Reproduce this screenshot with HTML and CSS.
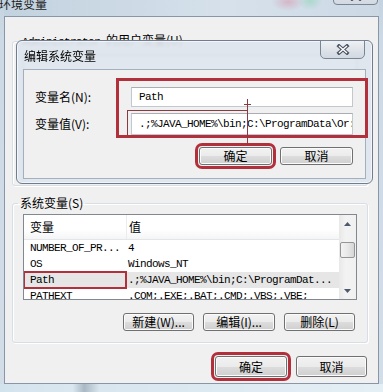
FILE: index.html
```html
<!DOCTYPE html>
<html>
<head>
    <meta charset="UTF-8">
    <title>环境变量</title>
    <link rel="stylesheet" href="styles.css">
</head>

<body>
    <div class="window">
        <div class="title-bar">
            <span class="title">环境变量</span>
            <div class="close-btn outer-close">
                <svg width="14" height="11" viewBox="0 0 14 11"><path d="M3 2 L11 9 M11 2 L3 9" stroke="#4c5563" stroke-width="3.6" stroke-linecap="square"/><path d="M3 2 L11 9 M11 2 L3 9" stroke="#fff" stroke-width="1.4"/></svg>
            </div>
        </div>

        <div class="win-body">
            <fieldset class="group user-group">
                <legend><span class="mono">Administrator </span>的用户变量(U)</legend>
                <div class="list user-list">
                    <div class="list-head"></div>
                </div>
            </fieldset>

            <fieldset class="group">
                <legend>系统变量(S)</legend>
                <div class="list">
                    <div class="list-main">
                        <div class="list-head"><div class="col-name">变量</div><div class="col-value">值</div></div>
                        <div class="row"><div class="col-name mono">NUMBER_OF_PR...</div><div class="col-value mono">4</div></div>
                        <div class="row"><div class="col-name mono">OS</div><div class="col-value mono">Windows_NT</div></div>
                        <div class="row selected"><div class="col-name mono marked-cell">Path</div><div class="col-value mono">.;%JAVA_HOME%\bin;C:\ProgramDat...</div></div>
                        <div class="row"><div class="col-name mono">PATHEXT</div><div class="col-value mono">.COM;.EXE;.BAT;.CMD;.VBS;.VBE;</div></div>
                    </div>
                    <div class="scrollbar">
                        <div class="arrow"><svg width="7" height="4" viewBox="0 0 7 4"><path d="M0 4 L3.5 0 L7 4 Z" fill="#4d5a6e"/></svg></div>
                        <div class="thumb"></div>
                        <div class="arrow down"><svg width="7" height="4" viewBox="0 0 7 4"><path d="M0 0 L3.5 4 L7 0 Z" fill="#4d5a6e"/></svg></div>
                    </div>
                </div>
                <div class="btn-row group-buttons">
                    <button class="btn w71">新建(W)...</button>
                    <button class="btn w72">编辑(I)...</button>
                    <button class="btn w71">删除(L)</button>
                </div>
            </fieldset>

            <div class="btn-row foot">
                <button class="btn w72 tall marked">确定</button>
                <button class="btn w71 tall">取消</button>
            </div>
        </div>

        <!-- диалог поверх окна -->
        <div class="dialog">
            <div class="dialog-title">
                <span>编辑系统变量</span>
                <div class="close-btn inner-close">
                    <svg width="14" height="11" viewBox="0 0 14 11"><path d="M3 2 L11 9 M11 2 L3 9" stroke="#4c5563" stroke-width="3.6" stroke-linecap="square"/><path d="M3 2 L11 9 M11 2 L3 9" stroke="#fff" stroke-width="1.4"/></svg>
                </div>
            </div>
            <div class="dialog-body">
                <div class="fields">
                    <label>变量名(N):</label>
                    <div class="input mono">Path</div>
                    <label>变量值(V):</label>
                    <div class="input mono tall-input">.;%JAVA_HOME%\bin;C:\ProgramData\Or:</div>
                </div>
                <div class="btn-row dialog-buttons">
                    <button class="btn w73 marked">确定</button>
                    <button class="btn w73">取消</button>
                </div>
                <div class="mark-box"></div>
                <div class="mark-line line-v"></div>
                <div class="mark-line line-h"></div>
                <div class="mark-line line-left"></div>
                <div class="mark-line line-tick"></div>
            </div>
        </div>
    </div>
</body>
</html>
```

FILE: styles.css
```css
* { box-sizing: border-box; }
body {
    margin: 0;
    width: 383px; height: 392px;
    overflow: hidden;
    background: linear-gradient(to right, #d3e3ee 0%, #dae7f0 19%, #a9b8c4 22%, #d9e6ef 26%, #e4eef5 100%);
    font: 12px/14px "Noto Sans CJK SC", sans-serif;
    color: #000;
}
.mono {
    font-family: "Liberation Mono", "Noto Sans CJK SC", monospace;
    font-size: 11px;
    letter-spacing: -0.6px;
}

.window {
    position: relative;
    height: 387px;
    padding: 0 4px;
    background: linear-gradient(#c4d3e0, #cdd9e5 40px, #d2dde8);
}
.title-bar {
    position: relative;
    height: 19px;
    background:
        radial-gradient(ellipse 16px 9px at 284px 5px, rgba(214,150,172,.55), transparent),
        radial-gradient(ellipse 12px 9px at 306px 4px, rgba(140,212,182,.55), transparent),
        linear-gradient(to right, #c2d2df, #d6e1eb 60%, #ccd9e5);
}
.title { display: block; margin: -3px 0 0 -5px; color: #1b1b1b; }

.close-btn {
    position: absolute;
    width: 45px; height: 19px;
    border: 1px solid #7a8594;
    border-radius: 0 0 4px 4px;
    background: linear-gradient(#eef1f5, #dfe4ea 50%, #d1d8e1);
    display: flex; justify-content: center; align-items: center;
}
.outer-close { right: 1px; top: -11px; }
.inner-close { right: 7px; top: -1px; border-radius: 0 0 5px 5px; }

.win-body {
    height: 368px;
    border: 1px solid #8796a8;
    background: #f0f0f0;
}

.group {
    width: 356px;
    min-width: 0;
    margin: 0 0 0 7px;
    padding: 0 10px;
    border: 1px solid #d5dfe5;
    border-radius: 3px;
    box-shadow: 1px 1px 0 #fff, inset 1px 1px 0 #fff;
}
.group legend { padding: 0 2px; margin-left: -5px; line-height: 14px; }
.user-group { margin-top: 16px; }
.user-group legend { margin-left: -3px; }
.user-group + .group { margin-top: 10px; padding: 4px 10px 11px; }

.list {
    display: flex;
    height: 86px;
    border: 1px solid #828790;
    background: #fff;
    overflow: hidden;
}
.user-list { display: block; height: 129px; margin-top: 6px; margin-bottom: 1px; }
.list-main { flex: 1; }
.list-head {
    display: grid;
    grid-template-columns: 102px 1fr;
    height: 25px;
    border-bottom: 1px solid #e5e5e5;
    background: linear-gradient(#fff, #fff 60%, #f4f5f7);
}
.list-head div { padding-left: 6px; line-height: 24px; }
.list-head .col-value { padding-left: 2px; border-left: 1px solid #ececec; }
.row {
    display: grid;
    grid-template-columns: 102px 1fr;
    height: 16px;
    line-height: 16px;
}
.row div { padding-left: 6px; white-space: nowrap; overflow: hidden; }
.row .col-value { padding-left: 2px; }
.row.selected { background: #e6e6e6; }
.marked-cell { outline: 2px solid #b2303c; outline-offset: -1px; overflow: visible !important; }

.scrollbar {
    width: 17px;
    display: flex;
    flex-direction: column;
    background: linear-gradient(to right, #e8e8e8, #f3f3f3 40%, #f0f0f0);
}
.arrow { height: 17px; display: flex; justify-content: center; align-items: center; }
.thumb {
    height: 16px;
    margin: 10px 1px 0;
    border: 1px solid #959595;
    border-radius: 2px;
    background: linear-gradient(to right, #f3f3f3, #e8e8e8 50%, #d6d6d6);
}
.arrow.down { margin-top: auto; }

.btn-row { display: flex; justify-content: flex-end; }
.btn {
    height: 18px;
    padding: 0;
    border: 1px solid #707070;
    border-radius: 3px;
    background: linear-gradient(#f2f2f2, #ebebeb 50%, #dddddd 50%, #cfcfcf);
    box-shadow: inset 0 0 0 1px #fbfbfb;
    font: inherit;
    line-height: 16px;
    color: #000;
}
.w71 { width: 71px; }
.w72 { width: 72px; }
.w73 { width: 73px; }
.tall { height: 21px; }
.marked { outline: 3px solid #b2303c; outline-offset: 1px; }
.group-buttons { gap: 9px; margin-top: 13px; padding-right: 2px; }
.foot { gap: 9px; margin-top: 13px; padding-right: 11px; }

.dialog {
    position: absolute;
    left: 16px; top: 43px;
    width: 357px; height: 144px;
    border: 1px solid #6f7d8e;
    border-radius: 6px;
    background: rgba(222,229,237,.92);
    backdrop-filter: blur(1.5px);
    box-shadow: inset 0 0 0 1px rgba(255,255,255,.6);
}
.dialog-title { position: relative; height: 28px; padding: 8px 0 0 7px; }
.dialog-body {
    position: relative;
    height: 110px;
    margin: 0 6px;
    padding: 17px 12px 0 11px;
    border: 1px solid #a3afbc;
    background: #f0f0f0;
}
.fields {
    display: grid;
    grid-template-columns: 96px 222px;
    grid-template-rows: 20px 22px;
    row-gap: 6px;
    align-items: center;
}
.input {
    height: 100%;
    padding-left: 7px;
    border: 1px solid #c2c8d0;
    border-top-color: #abadb3;
    background: #fff;
    line-height: 18px;
    white-space: nowrap;
    overflow: hidden;
}
.tall-input { line-height: 20px; }
.dialog-buttons { gap: 8px; margin-top: 12px; }

.mark-box {
    position: absolute;
    left: 92px; top: 8px;
    width: 252px; height: 60px;
    border: 3px solid #b2303c;
}
.mark-line { position: absolute; background: #8a3a40; }
.line-v { left: 223px; top: 29px; width: 1px; height: 46px; }
.line-h { left: 103px; top: 40px; width: 121px; height: 1px; }
.line-left { left: 103px; top: 40px; width: 1px; height: 25px; }
.line-tick { left: 220px; top: 34px; width: 7px; height: 1px; }
```
